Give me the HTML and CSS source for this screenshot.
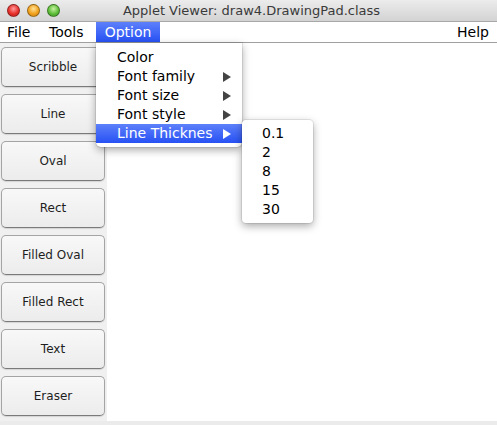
FILE: index.html
```html
<!DOCTYPE html>
<html>
<head>
<meta charset="utf-8">
<link rel="stylesheet" href="styles.css">
</head>
<body>
<div class="window">
  <div class="titlebar">
    <div class="lights">
      <span class="light red"></span>
      <span class="light yellow"></span>
      <span class="light green"></span>
    </div>
    <div class="title">Applet Viewer: draw4.DrawingPad.class</div>
  </div>
  <div class="menubar">
    <span class="menu m-file">File</span>
    <span class="menu m-tools">Tools</span>
    <span class="menu m-option active">Option</span>
    <span class="spacer"></span>
    <span class="menu m-help">Help</span>
  </div>
  <div class="main">
    <div class="toolbar">
      <div class="btn">Scribble</div>
      <div class="btn">Line</div>
      <div class="btn">Oval</div>
      <div class="btn">Rect</div>
      <div class="btn">Filled Oval</div>
      <div class="btn">Filled Rect</div>
      <div class="btn">Text</div>
      <div class="btn">Eraser</div>
    </div>
    <div class="canvas"></div>
  </div>
  <div class="statusbar"></div>

  <div class="dropdown">
    <div class="item">Color</div>
    <div class="item sub">Font family<span class="arrow"></span></div>
    <div class="item sub">Font size<span class="arrow"></span></div>
    <div class="item sub">Font style<span class="arrow"></span></div>
    <div class="item sub selected">Line Thicknes<span class="arrow"></span></div>
  </div>
  <div class="submenu">
    <div class="item">0.1</div>
    <div class="item">2</div>
    <div class="item">8</div>
    <div class="item">15</div>
    <div class="item">30</div>
  </div>
</div>
</body>
</html>
```
FILE: styles.css
```css
* { box-sizing: border-box; }
html, body { margin: 0; padding: 0; }
body {
  width: 497px;
  height: 425px;
  overflow: hidden;
  font-family: "DejaVu Sans", "Liberation Sans", sans-serif;
  background: #ffffff;
}
.window {
  position: relative;
  width: 497px;
  height: 425px;
  display: flex;
  flex-direction: column;
}
.titlebar {
  height: 22px;
  flex: none;
  background: linear-gradient(#ececec, #d3d3d3);
  border-bottom: 1px solid #a8a8a8;
  display: flex;
  align-items: center;
  position: relative;
}
.lights {
  display: flex;
  gap: 7px;
  padding-left: 7px;
}
.light {
  width: 13px;
  height: 13px;
  border-radius: 50%;
  border: 1px solid rgba(0,0,0,0.35);
}
.red { background: radial-gradient(circle at 50% 35%, #ff9c9c 0, #e8312c 55%, #b31c18 100%); }
.yellow { background: radial-gradient(circle at 50% 35%, #ffe29a 0, #f2a21d 55%, #c17a0e 100%); }
.green { background: radial-gradient(circle at 50% 35%, #c9f2a5 0, #5fbf3a 55%, #3a8c22 100%); }
.title {
  flex: 1;
  text-align: center;
  font-size: 13px;
  color: #3a3a3a;
  margin-right: 54px;
}
.menubar {
  height: 21px;
  flex: none;
  display: flex;
  align-items: stretch;
  background: #ffffff;
  border-bottom: 1px solid #a0a0a0;
  font-size: 14px;
  color: #000;
}
.menu {
  display: flex;
  align-items: center;
}
.m-file { width: 44px; padding-left: 7px; }
.m-tools { width: 52px; padding-left: 5px; }
.m-option { width: 64px; justify-content: center; }
.active {
  background: linear-gradient(#5d80fa, #2751f4);
  color: #ffffff;
}
.spacer { flex: 1; }
.m-help { padding-right: 8px; }
.main {
  flex: 1;
  display: flex;
  min-height: 0;
}
.toolbar {
  width: 107px;
  flex: none;
  background: #f0f0f0;
  display: flex;
  flex-direction: column;
  gap: 7px;
  padding: 4px 2px 0 1px;
}
.btn {
  height: 40px;
  border: 1px solid #a4a4a4;
  border-bottom-color: #7a7a7a;
  border-radius: 5px;
  background: linear-gradient(#f8f8f8, #ececec);
  box-shadow: 0 1px 1px rgba(0,0,0,0.12);
  display: flex;
  align-items: center;
  justify-content: center;
  font-size: 12px;
  color: #1e1e1e;
}
.canvas {
  flex: 1;
  background: #ffffff;
}
.statusbar {
  height: 4px;
  flex: none;
  background: #ebebeb;
}
.dropdown, .submenu {
  position: absolute;
  background: #ffffff;
  border-radius: 0 0 5px 5px;
  box-shadow: 0 3px 8px rgba(0,0,0,0.35), 0 0 0 1px rgba(0,0,0,0.08);
  font-size: 14px;
}
.dropdown {
  left: 96px;
  top: 43px;
  width: 146px;
  padding: 5px 0 4px;
}
.submenu {
  left: 242px;
  top: 120px;
  width: 71px;
  padding: 4px 0 4px;
  border-radius: 4px;
}
.item {
  height: 19px;
  line-height: 19px;
  padding-left: 21px;
  position: relative;
  color: #000;
}
.submenu .item { padding-left: 20px; }
.item.selected {
  background: linear-gradient(#5d80fa, #2751f4);
  color: #ffffff;
}
.arrow {
  position: absolute;
  right: 11px;
  top: 5px;
  width: 0;
  height: 0;
  border-top: 5px solid transparent;
  border-bottom: 5px solid transparent;
  border-left: 8px solid #444;
}
.selected .arrow { border-left-color: #ffffff; }
```
